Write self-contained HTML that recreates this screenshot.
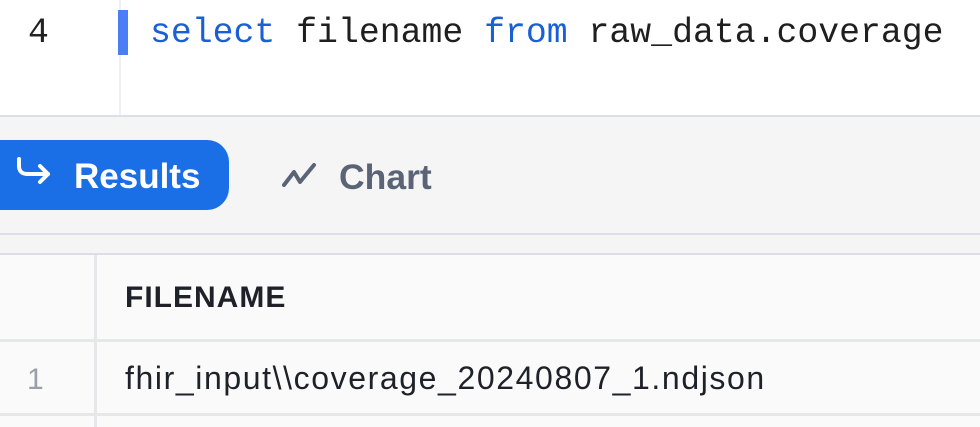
<!DOCTYPE html>
<html><head><style>
html,body{margin:0;padding:0;width:980px;height:427px;overflow:hidden;background:#fff;font-family:"Liberation Sans",sans-serif;}
.abs{position:absolute}
</style></head><body>
<div class="abs" style="left:119px;top:0;width:2px;height:115px;background:#f0f1f3"></div>
<div class="abs" style="left:28px;top:14px;font:34.8px 'Liberation Mono',monospace;color:#222">4</div>
<div class="abs" style="left:118px;top:10px;width:10px;height:45px;background:#4a7ef7"></div>
<div class="abs" style="left:150px;top:14px;font:34.8px 'Liberation Mono',monospace;color:#1f1f1f;white-space:pre"><span style="color:#1a5fd6">select</span> filename <span style="color:#1a5fd6">from</span> raw_data.coverage</div>
<div class="abs" style="left:0;top:115px;width:980px;height:2px;background:#dcdfe6"></div>
<div class="abs" style="left:0;top:117px;width:980px;height:136px;background:#f5f5f6"></div>
<div class="abs" style="left:0;top:233px;width:980px;height:2px;background:#dcdfe6"></div>
<div class="abs" style="left:0;top:253px;width:980px;height:2px;background:#dcdfe6"></div>
<div class="abs" style="left:-30px;top:140px;width:259px;height:70px;background:#1b6fe6;border-radius:22px"></div>
<svg class="abs" style="left:14px;top:155px" width="40" height="36" viewBox="0 0 40 36"><path d="M5 4v7c0 5 3 8 8 8h21M26 11l8 8-8 8" fill="none" stroke="#fff" stroke-width="4" stroke-linecap="round" stroke-linejoin="round"/></svg>
<div class="abs" style="left:74px;top:157px;font-weight:bold;font-size:35px;color:#fff">Results</div>
<svg class="abs" style="left:280px;top:160px" width="40" height="30" viewBox="0 0 40 30"><path d="M4 25l10-13 6 10 14-17" fill="none" stroke="#5b6477" stroke-width="4" stroke-linecap="round" stroke-linejoin="round"/></svg>
<div class="abs" style="left:339px;top:157px;font-weight:bold;font-size:35.5px;color:#5b6477">Chart</div>
<div class="abs" style="left:0;top:255px;width:980px;height:172px;background:#fafafa"></div>
<div class="abs" style="left:94px;top:255px;width:3px;height:172px;background:#e6e7ea"></div>
<div class="abs" style="left:0;top:339px;width:980px;height:3px;background:#e6e7ea"></div>
<div class="abs" style="left:0;top:413px;width:980px;height:3px;background:#e6e7ea"></div>
<div class="abs" style="left:125px;top:281px;font-weight:bold;font-size:30px;letter-spacing:1px;color:#1e2128">FILENAME</div>
<div class="abs" style="left:27px;top:363px;font-size:30px;color:#9aa0aa">1</div>
<div class="abs" style="left:125px;top:360px;font-size:32px;letter-spacing:1.6px;color:#1e2128;white-space:nowrap">fhir_input\\coverage_20240807_1.ndjson</div>
</body></html>
